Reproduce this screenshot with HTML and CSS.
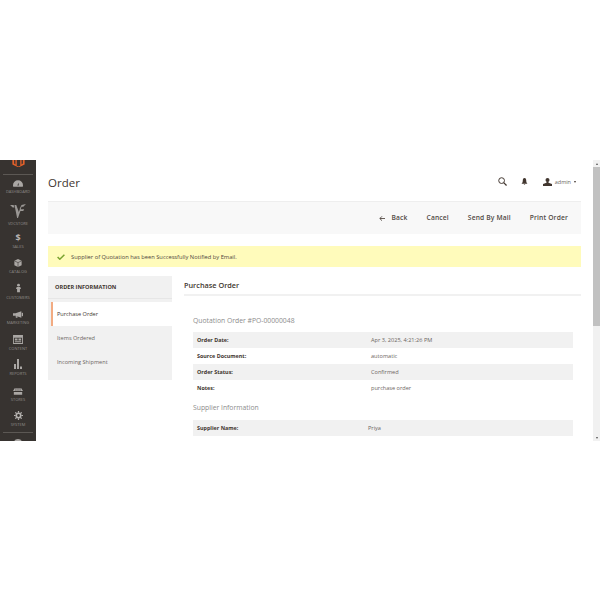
FILE: index.html
```html
<!DOCTYPE html>
<html lang="en">
<head>
<meta charset="utf-8">
<title>Order</title>
<link rel="stylesheet" href="styles.css">
</head>
<body>
<div class="frame">
  <nav class="sidebar">
    <div class="logo"><svg width="13" height="7" viewBox="0 0 14 8"><path d="M0 0h2v4l1.500 1V0h1.500v6.500L7 7.500l2-1V0h1.500v5L12 4V0h2v5L8 8H6L0 5z" fill="#e2602a"/></svg></div>
    <div class="rule"></div>
    <a class="nav nav-first"><svg width="10" height="7" viewBox="0 0 12 8"><path d="M6 0a6 6 0 0 0-6 6c0 .7.100 1.400.3 2h11.400c.2-.6.300-1.300.3-2a6 6 0 0 0-6-6zm.6 3L7 6.500H5.200z" fill="#aaa7a4" fill-rule="evenodd"/></svg><span>DASHBOARD</span></a>
    <a class="nav nav-v"><svg width="16" height="15" viewBox="0 0 18 17"><path d="M0 1h4l1 3h-2zM5 1h2l3 8 1-3 1 1-3 9H8zM11 5l2-4 5-1-3 3h-2l-1 3h4l-1 2h-4z" fill="#9a9794"/></svg><span>VDCSTORE</span></a>
    <a class="nav nav-sales"><b class="dollar">$</b><span>SALES</span></a>
    <a class="nav"><svg width="8" height="8" viewBox="0 0 11 11"><path d="M5.500 0l5 2.500v6L5.500 11l-5-2.500v-6z" fill="#aaa7a4"/><path d="M.5 2.500l5 2.500 5-2.500M5.500 5v6" stroke="#373330" fill="none" stroke-width=".8"/></svg><span>CATALOG</span></a>
    <a class="nav"><svg width="5" height="10" viewBox="0 0 7 12"><circle cx="3.500" cy="2" r="2" fill="#aaa7a4"/><path d="M1 4.500h5l1 3H5.500V12h-4V7.500H0z" fill="#aaa7a4"/></svg><span>CUSTOMERS</span></a>
    <a class="nav"><svg width="10" height="7" viewBox="0 0 12 8"><path d="M0 2.500h3L10 0v8L3 5.500H0zM3 6h2l.5 2h-2z" fill="#aaa7a4"/><rect x="10.500" y="2" width="1.500" height="4" fill="#aaa7a4"/></svg><span>MARKETING</span></a>
    <a class="nav"><svg width="10" height="9" viewBox="0 0 11 10"><path d="M0 0h11v10H0zm1 3v6h9V3zm1 1h3v2H2zm4 0h3v2H6zM2 7h7v1H2z" fill="#aaa7a4" fill-rule="evenodd"/></svg><span>CONTENT</span></a>
    <a class="nav"><svg width="8" height="10" viewBox="0 0 8 10"><path d="M0 5h2v5H0zM3 0h2v10H3zM6 7.500h2V10H6z" fill="#aaa7a4"/></svg><span>REPORTS</span></a>
    <a class="nav"><svg width="10" height="7" viewBox="0 0 12 8"><path d="M2 0h8l2 3.500H0zM1 4.500h10V8H1z" fill="#aaa7a4"/><path d="M3.500 0v3.500M6 0v3.500M8.500 0v3.500" stroke="#373330" stroke-width=".6"/></svg><span>STORES</span></a>
    <a class="nav"><svg width="9" height="9" viewBox="0 0 11 11"><circle cx="5.500" cy="5.500" r="2.700" fill="none" stroke="#b5b2af" stroke-width="2"/><path d="M5.500 0v11M0 5.500h11M1.600 1.600l7.800 7.800M9.400 1.600L1.600 9.400" stroke="#b5b2af" stroke-width="1.500" stroke-dasharray="2 7 2"/></svg><span>SYSTEM</span></a>
    <div class="rule rule-low"></div>
    <div class="nav-partial"><svg width="10" height="10" viewBox="0 0 11 11"><circle cx="5.500" cy="5.500" r="4.500" fill="#aaa7a4"/></svg></div>
  </nav>

  <main class="main">
    <header class="topbar">
      <h1 class="title">Order</h1>
      <div class="tools">
        <svg class="tool-search" width="9" height="9" viewBox="0 0 10 10"><circle cx="4" cy="4" r="3.200" fill="none" stroke="#41362f" stroke-width="1.100"/><path d="M6.300 6.300L9.500 9.500" stroke="#41362f" stroke-width="1.400"/></svg>
        <svg class="tool-bell" width="7" height="7" viewBox="0 0 7 8"><path d="M3.500 0C5 0 5.500 1.500 5.500 3S6 5.500 7 6.500H0C1 5.500 1.500 4.500 1.500 3S2 0 3.500 0zM2.500 7h2l-1 1z" fill="#41362f"/></svg>
        <span class="user">
          <svg width="9" height="8" viewBox="0 0 9 8"><circle cx="4.500" cy="2" r="2" fill="#41362f"/><path d="M3.500 3.500h2v1.200L9 6v2H0V6l3.500-1.300z" fill="#41362f"/></svg>
          <span class="user-name">admin</span>
          <i class="caret"></i>
        </span>
      </div>
    </header>

    <div class="actions">
      <a class="action action-back"><svg width="6" height="5" viewBox="0 0 6 5"><path d="M6 2.500H1M3 .3L.8 2.500 3 4.700" fill="none" stroke="#41362f" stroke-width=".8"/></svg>Back</a>
      <a class="action">Cancel</a>
      <a class="action">Send By Mail</a>
      <a class="action">Print Order</a>
    </div>

    <div class="message">
      <svg width="8" height="6" viewBox="0 0 8 6"><path d="M.6 3l2.200 2.200L7.400.8" fill="none" stroke="#79a22e" stroke-width="1.500"/></svg>
      <span>Supplier of Quotation has been Successfully Notified by Email.</span>
    </div>

    <div class="columns">
      <aside class="tabs">
        <div class="tabs-head">ORDER INFORMATION</div>
        <ul class="tab-list">
          <li class="tab tab-active">Purchase Order</li>
          <li class="tab">Items Ordered</li>
          <li class="tab">Incoming Shipment</li>
        </ul>
      </aside>
      <section class="content">
        <h2 class="content-title">Purchase Order</h2>
        <div class="content-body">
          <h3 class="sub sub-first">Quotation Order #PO-00000048</h3>
          <table class="info">
            <tr><th>Order Date:</th><td>Apr 3, 2025, 4:21:26 PM</td></tr>
            <tr><th>Source Document:</th><td>automatic</td></tr>
            <tr><th>Order Status:</th><td>Confirmed</td></tr>
            <tr><th>Notes:</th><td>purchase order</td></tr>
          </table>
          <h3 class="sub sub-second">Supplier Information</h3>
          <table class="info info-supplier">
            <tr><th>Supplier Name:</th><td>Priya</td></tr>
          </table>
        </div>
      </section>
    </div>
  </main>

  <div class="scrollbar">
    <i class="arrow arrow-up"></i>
    <div class="track"><div class="thumb"></div></div>
    <i class="arrow arrow-down"></i>
  </div>
</div>
</body>
</html>
```
FILE: styles.css
```css
* { box-sizing: border-box; }
html, body { margin: 0; padding: 0; background: #fff; }
body { font-family: "Open Sans", "Liberation Sans", sans-serif; color: #41362f; height: 600px; overflow: hidden; padding-top: 160px; }
svg { display: block; flex: none; }

.frame { display: flex; height: 281px; overflow: hidden; background: #fff; }

.sidebar { flex: 0 0 36px; background: #373330; display: flex; flex-direction: column; align-items: center; overflow: hidden; }
.logo { height: 7px; flex: none; }
.rule { width: 30px; height: 1px; background: #5c5854; margin-top: 7px; flex: none; }
.rule-low { margin-top: 5px; margin-bottom: 5px; }
.nav { flex: 0 0 25.500px; display: flex; flex-direction: column; align-items: center; justify-content: flex-end; gap: 2px; width: 36px; }
.nav span { font-size: 4px; line-height: 5px; color: #8f8c89; white-space: nowrap; }
.nav-first { flex-basis: 18.500px; }
.nav-v { flex-basis: 32px; }
.nav-sales { flex-basis: 23px; }
.nav-partial { flex: none; }
.dollar { font-size: 9px; line-height: 9px; font-weight: 700; color: #b5b2af; }

.main { flex: 1; min-width: 0; padding: 0 12px; }
.topbar { display: flex; justify-content: space-between; align-items: center; height: 41px; padding-top: 5px; }
.title { margin: 0; font-size: 11.500px; line-height: 16px; font-weight: 400; color: #41362f; }
.tools { display: flex; align-items: center; margin-right: 5px; margin-top: -3px; }
.tool-search { margin-right: 14px; }
.tool-bell { margin-right: 15px; }
.user { display: flex; align-items: center; gap: 3px; }
.user-name { font-size: 5.500px; line-height: 8px; color: #6b6561; }
.caret { width: 0; height: 0; border: 1.500px solid transparent; border-top: 2px solid #41362f; border-bottom: 0; }

.actions { display: flex; justify-content: flex-end; align-items: center; gap: 19px; height: 33px; padding-right: 13px; background: #f8f8f8; border-top: 1px solid #eee; }
.action { display: flex; align-items: center; gap: 6px; font-size: 6.700px; line-height: 10px; font-weight: 600; color: #514a45; letter-spacing: .15px; }

.message { display: flex; align-items: center; gap: 6px; height: 21px; margin-top: 12px; padding-left: 9px; background: #fffbbb; font-size: 5.750px; color: #4f4840; }

.columns { display: flex; align-items: flex-start; gap: 12px; margin-top: 9px; }
.tabs { flex: 0 0 124px; background: #f1f1f1; height: 104px; }
.tabs-head { height: 23px; padding-left: 7px; font-size: 5.600px; line-height: 22px; font-weight: 700; color: #41362f; border-bottom: 1px solid #e6e6e6; }
.tab-list { list-style: none; margin: 3px 0 0; padding: 0 0 0 3px; }
.tab { height: 24px; padding-left: 6px; font-size: 5.600px; line-height: 24px; color: #6b6561; }
.tab-active { background: #fff; color: #41362f; padding-left: 4px; border-left: 2px solid #f2ab82; }

.content { flex: 1; min-width: 0; }
.content-title { margin: 0; height: 20px; font-size: 7.300px; line-height: 18px; font-weight: 600; color: #41362f; border-bottom: 2px solid #f1f1f1; }
.content-body { padding: 0 8px 0 9px; }
.sub { margin: 0; font-size: 6.800px; font-weight: 400; color: #8c8c8c; line-height: 10px; }
.sub-first { padding-top: 20px; height: 36px; }
.sub-second { padding-top: 7px; height: 24px; }
.info { width: 100%; border-collapse: collapse; table-layout: fixed; }
.info tr { height: 16px; }
.info tr:nth-child(odd) { background: #f1f1f1; }
.info th { width: 178px; padding: 0 0 0 4px; text-align: left; font-size: 5.400px; line-height: 16px; font-weight: 700; color: #41362f; }
.info td { padding: 0; font-size: 5.600px; line-height: 16px; color: #6b6561; }
.info-supplier th { width: 175px; }

.scrollbar { flex: 0 0 7px; display: flex; flex-direction: column; background: #f1f1f1; }
.arrow { flex: 0 0 7px; display: flex; }
.arrow-up::before, .arrow-down::before { content: ""; width: 0; height: 0; margin: auto; border: 1.500px solid transparent; }
.arrow-up::before { border-top: 0; border-bottom: 2px solid #505050; }
.arrow-down::before { border-bottom: 0; border-top: 2px solid #505050; }
.track { flex: 1; }
.thumb { height: 159px; background: #c1c1c1; }
```
